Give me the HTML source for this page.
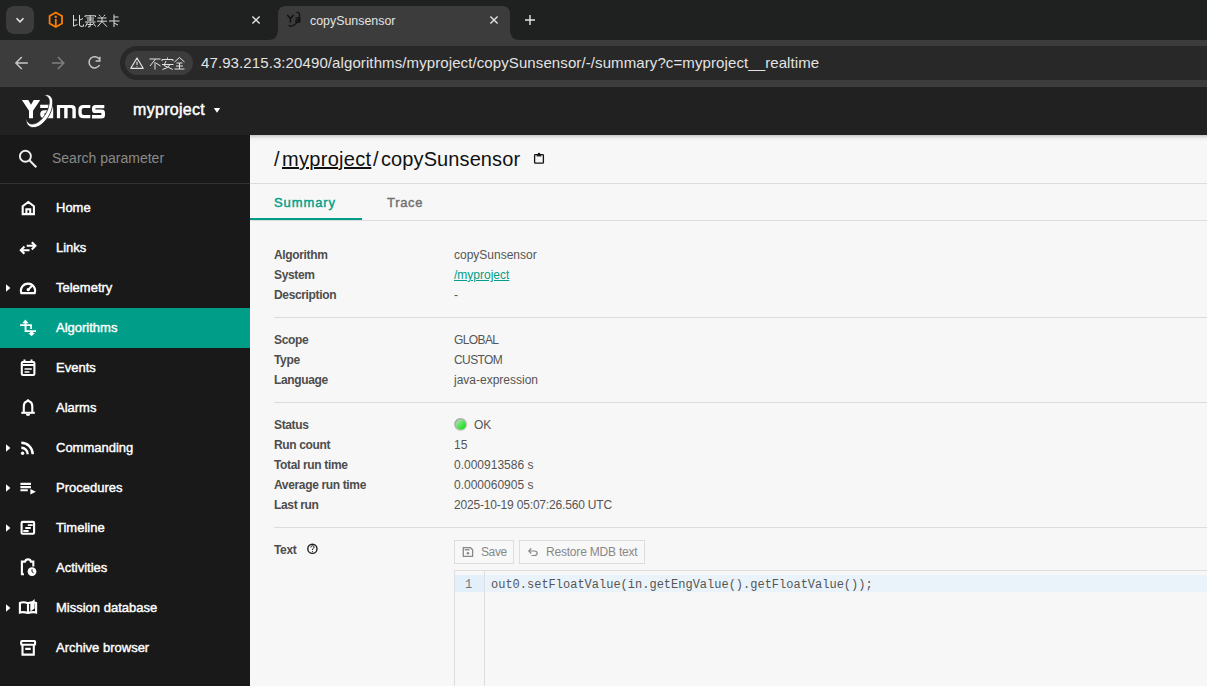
<!DOCTYPE html>
<html><head><meta charset="utf-8">
<style>
*{box-sizing:border-box;margin:0;padding:0}
html,body{width:1207px;height:686px;overflow:hidden;background:#f7f7f7;font-family:"Liberation Sans",sans-serif}
.a{position:absolute}
svg{position:absolute;overflow:visible}
.t{position:absolute;white-space:nowrap;line-height:1}
#frame{left:0;top:0;width:1207px;height:40px;background:#1f2020}
#toolbar{left:0;top:40px;width:1207px;height:47px;background:#3c3c3c}
#omni{left:120px;top:46px;width:1120px;height:34px;border-radius:17px;background:#282828}
#chip{left:125px;top:51px;width:68px;height:24px;border-radius:12px;background:#3c3c3c}
#header{left:0;top:87px;width:1207px;height:48px;background:#212121}
#side{left:0;top:135px;width:250px;height:551px;background:#191919}
#main{left:250px;top:135px;width:957px;height:551px;background:#f7f7f7}
.nav{position:absolute;left:56px;color:#fff;font-size:13px;-webkit-text-stroke:0.4px #fff;white-space:nowrap;line-height:1}
.lbl{position:absolute;left:274px;color:#4d4d4d;font-size:12px;font-weight:bold;letter-spacing:-0.35px;white-space:nowrap;line-height:1}
.val{position:absolute;left:454px;color:#555;font-size:12px;white-space:nowrap;line-height:1}
.hr{position:absolute;left:274px;width:933px;height:1px;background:#dcdcdc}
</style></head><body>
<!-- browser chrome -->
<div id="frame" class="a"></div>
<div class="a" style="left:6px;top:6px;width:28px;height:28px;border-radius:8px;background:#3c3c3c"></div>
<svg style="left:0;top:0" width="40" height="40"><path d="M16.5 18.3 L20 21.8 L23.5 18.3" fill="none" stroke="#e3e3e3" stroke-width="1.6"/></svg>
<!-- tab 1 -->
<svg style="left:0;top:0" width="280" height="40">
  <path d="M55.8 12.5 L62 16 L62 23.5 L55.8 27 L49.6 23.5 L49.6 16 Z" fill="none" stroke="#ff7d00" stroke-width="1.8"/>
  <circle cx="55.8" cy="16.8" r="1.2" fill="#ff7d00"/>
  <path d="M55.8 19 L55.8 26" stroke="#ff7d00" stroke-width="1.8"/>
  <path d="M252.4 16.4 L259.6 23.6 M259.6 16.4 L252.4 23.6" stroke="#e3e3e3" stroke-width="1.4"/>
</svg>
<!-- chinese 比赛关卡 approximations -->
<svg style="left:72px;top:14px" width="50" height="14">
  <g fill="none" stroke="#dcdcdc" stroke-width="1">
    <path d="M1.5 1 V12.2 L5.5 10.5 M1.5 6 H5 M7.5 1 V11 Q7.5 12.3 9 12.3 H11.5 V10.5 M7.5 6.2 L11 4.5"/>
    <path d="M13 3 V1.8 H23.5 V3 M14.5 4 H22 M15 6 H22 M18.2 1 V7 M13 8 H23.5 M15.5 8.5 L13.5 12.5 M21 8.5 L23.5 12.5 M15.5 10.5 H21 M18.2 8.5 V12.5 L16 13"/>
    <path d="M27 0.8 L28.5 2.5 M33 0.8 L31.5 2.5 M25.5 4 H34.5 M25 7.2 H35 M30 3 V7.5 L25.5 12.8 M30 7.5 L35 12.8"/>
    <path d="M42 0.5 V13 M42 3 H46.5 M37 7 H47.5 M42 9 L46 11"/>
  </g>
</svg>
<div class="t" style="left:72px;top:14px;font-size:12px;color:#dcdcdc"></div>
<!-- active tab -->
<svg style="left:268px;top:0" width="256" height="41">
  <path d="M0 40 Q10 40 10 30 L10 14 Q10 6 18 6 L234 6 Q242 6 242 14 L242 30 Q242 40 252 40 Z" fill="#3c3c3c"/>
</svg>
<!-- favicon black yamcs -->
<svg style="left:0;top:0" width="310" height="40">
  <g fill="none" stroke="#111">
  <path d="M287.3 15.1 L290.4 18.6 L293.5 15.1 M290.4 18.6 V22.8" stroke-width="1.5"/>
  <path d="M295.5 17.8 H299.8 V22.2 H296.5 Q295.5 22 295.7 20.8 Q296 20 297 20 H299.8" stroke-width="1.3"/>
  <path d="M296.6 12.5 Q299.6 11.8 299.6 15.5 Q299.4 21.5 294.3 24.8 Q289.8 28 289 24.8" stroke-width="1.4"/>
  </g>
</svg>
<div class="t" style="left:310px;top:15px;font-size:12.4px;color:#e3e3e3">copySunsensor</div>
<svg style="left:0;top:0" width="560" height="40">
  <path d="M490.4 16.4 L497.6 23.6 M497.6 16.4 L490.4 23.6" stroke="#e3e3e3" stroke-width="1.4"/>
  <path d="M525 20 H535 M530 15 V25" stroke="#e3e3e3" stroke-width="1.4"/>
</svg>
<div id="toolbar" class="a"></div>
<svg style="left:0;top:40px" width="120" height="47">
  <path d="M16.5 23 H27.8 M21.8 17 L15.9 23 L21.8 29" fill="none" stroke="#c7c7c7" stroke-width="1.5"/>
  <path d="M52 23 H63.3 M57.9 17 L63.8 23 L57.9 29" fill="none" stroke="#7f7f7f" stroke-width="1.5"/>
  <path d="M99.2 19 A5.6 5.6 0 1 0 99.6 25" fill="none" stroke="#c7c7c7" stroke-width="1.5"/>
  <path d="M99.8 16.8 V21 H95.6" fill="none" stroke="#c7c7c7" stroke-width="1.5"/>
</svg>
<div id="omni" class="a"></div>
<div id="chip" class="a"></div>
<svg style="left:125px;top:51px" width="70" height="24">
  <path d="M12 7 L18.2 17.3 H5.8 Z" fill="none" stroke="#e3e3e3" stroke-width="1.2" stroke-linejoin="round"/>
  <path d="M12 10.5 V14 M12 15.3 V16" stroke="#e3e3e3" stroke-width="1.1"/>
  <g fill="none" stroke="#e3e3e3" stroke-width="1">
    <path d="M24.5 8 H35.5 M30.5 8 L25 15 M30 11 V18.5 M31 12 L35.5 15"/>
    <path d="M42.5 6.5 V7.8 M37 10 V8.5 H48 V10 M41 10 L39 14.5 Q44 16.5 47.8 18.5 M37 13.5 H48.5 M45 13.5 Q44 17 37.5 18.5"/>
    <path d="M54.5 6.5 L49.5 11 M54.5 6.5 L59.5 11 M51.5 12 H57.5 M51 15 H58 M54.5 12 V18 M49.5 18 H59.5"/>
  </g>
</svg>
<div class="t" style="left:201px;top:55px;font-size:15px;letter-spacing:0.1px;color:#e3e3e3">47.93.215.3:20490/algorithms/myproject/copySunsensor/-/summary?c=myproject__realtime</div>

<!-- yamcs header -->
<div id="header" class="a"></div>
<svg style="left:0;top:0" width="240" height="140">
  <g fill="#fff">
    <path d="M21.9 100 H28.3 L31 104.8 L33.7 100 H40.2 L33 110.8 V118.3 H29 V110.8 Z"/>
    <path fill-rule="evenodd" d="M40.2 104.7 H49.4 Q53.2 104.7 53.2 108.5 V118.3 H44.3 Q40.2 118.3 40.2 114.3 Q40.2 110.3 44.3 110.3 H49.6 V108.1 H40.2 Z M44.6 112.9 H49.6 V115.2 H44.6 Z"/>
    <path d="M56.9 104.9 H71.5 Q75.8 104.9 75.8 109.2 V118.3 H72.4 V109.6 Q72.4 108.1 71 108.1 H67.6 V118.3 H64.2 V108.1 H60.1 V118.3 H56.9 Z"/>
    <path d="M90.3 104.9 H83.5 Q78.4 104.9 78.4 110 V113.2 Q78.4 118.3 83.5 118.3 H90.3 V115.1 H83.8 Q81.7 115.1 81.7 113 V110.2 Q81.7 108.1 83.8 108.1 H90.3 Z"/>
    <path d="M104.3 105 H95.5 Q92 105 92 108.5 V110 Q92 113.1 95 113.1 H100.8 Q101.5 113.1 101.5 114 Q101.5 115 100.8 115 H92 V118.6 H101.5 Q105 118.6 105 115.1 V113 Q105 109.6 101.5 109.6 H96 Q95.3 109.6 95.3 108.9 Q95.3 108.2 96 108.2 H104.3 Z"/>
  </g>
  <path d="M26.3 117.5 C25 127 33.5 130.5 41 124.8 C48 119.5 53.8 109.5 52.6 100.5 C52 95.5 48 93.3 43.3 95.5 C47 95.3 49.5 98 49.3 102 C49 109.5 44.5 117.5 38.5 121.8 C33 125.5 27.2 125 26.3 117.5 Z" fill="#fff" stroke="#212121" stroke-width="0.8"/>
</svg>
<div class="t" style="left:133px;top:102px;font-size:16px;-webkit-text-stroke:0.45px #fff;letter-spacing:0.3px;color:#fff">myproject</div>
<svg style="left:213px;top:107px" width="8" height="7"><path d="M0.8 1 H7.2 L4 5.8 Z" fill="#fff"/></svg>

<!-- sidebar -->
<div id="side" class="a"></div>
<div class="a" style="left:0;top:183px;width:250px;height:1px;background:#333"></div>
<svg style="left:0;top:0" width="50" height="180">
  <circle cx="25.4" cy="156.3" r="5.5" fill="none" stroke="#eee" stroke-width="1.9"/>
  <path d="M29.4 160.3 L36.3 167.2" stroke="#eee" stroke-width="2.1"/>
</svg>
<div class="t" style="left:52px;top:151px;font-size:14px;color:#8a8a8a">Search parameter</div>

<div class="a" style="left:0;top:308px;width:250px;height:40px;background:#009e88"></div>
<svg style="left:0;top:0" width="250" height="686">
 <g fill="#fff">
  <path d="M6 284.2 L10.4 288 L6 291.8 Z"/>
  <path d="M6 444.2 L10.4 448 L6 451.8 Z"/>
  <path d="M6 484.2 L10.4 488 L6 491.8 Z"/>
  <path d="M6 524.2 L10.4 528 L6 531.8 Z"/>
  <path d="M6 604.2 L10.4 608 L6 611.8 Z"/>
 </g>
 <g fill="none" stroke="#fff" stroke-width="2.1">
  <!-- home -->
  <path d="M22.7 214.1 V206.2 L28.3 202 L33.9 206.2 V214.1 Z M26.4 214.1 V209.3 H30.2 V214.1" stroke-linejoin="miter"/>
  <!-- links -->
  <path d="M26.7 245.8 H35.5 M31.8 242.2 L35.4 245.8 L31.8 249.4"/>
  <path d="M29.5 250.2 H20.6 M24.4 246.6 L20.8 250.2 L24.4 253.8"/>
  <!-- telemetry gauge -->
  <path d="M21.3 293.1 A7.1 7.1 0 1 1 34.7 293.1 Z"/>
  <path d="M28.3 289.6 L33 284.7" stroke-width="2"/>
  <!-- events -->
  <rect x="21.8" y="362" width="12.6" height="13" rx="1.2"/>
  <path d="M21.8 365 H34.4 M24.5 359.5 V362 M31.5 359.5 V362"/>
  <path d="M24.5 369 H31.8 M24.5 372 H29.5" stroke-width="1.7"/>
  <!-- alarms bell -->
  <path d="M23.8 412.8 V406.5 Q23.8 402.6 26.6 401.6 L28.05 400.2 L29.5 401.6 Q32.3 402.6 32.3 406.5 V412.8" stroke-linejoin="round"/>
  <path d="M21.3 412.8 H34.8"/>
  <!-- commanding rss -->
  <path d="M21.3 447.8 A6.4 6.4 0 0 1 27.7 454.2 M21.3 442.8 A11.4 11.4 0 0 1 32.7 454.2" stroke-width="2.4"/>
  <!-- procedures -->
  <path d="M20.4 483.9 H31 M20.4 487.1 H31 M20.4 490.2 H27.8"/>
  <!-- timeline -->
  <rect x="21.6" y="521.9" width="12.5" height="11.9" rx="1"/>
  <path d="M27.8 525.1 H32.7 M25.3 528 H30.8 M23.3 531 H28.6" stroke-width="1.8"/>
  <!-- activities clipboard -->
  <path d="M30 561.6 H33.3 V566.5 M24 574.2 H21.9 V561.6 H25.8 M25.2 561.6 Q25.5 559.4 28 559.4 Q30.5 559.4 30.8 561.6"/>
  <!-- mission database book -->
  <path d="M19.9 612.5 V603 Q23.5 601.5 28 603.2 Q32.5 601.5 36.1 603 V612.5 Q32.5 611.5 28 613 Q23.5 611.5 19.9 612.5 Z M28 603.2 V613"/>
  <!-- archive -->
  <rect x="21.2" y="641" width="13.9" height="3.8" rx="0.8"/>
  <path d="M22.5 645 V654.6 H33.8 V645 M25.2 648.9 H30.7"/>
 </g>
 <g fill="#fff">
  <circle cx="28.2" cy="289.7" r="1.6"/>
  <path d="M25.4 319.6 L28.6 323.2 L26.5 323.2 L26.5 330.2 L36 330.2 L36 332 L24.6 332 L24.6 323.2 L22.2 323.2 Z"/>
  <path d="M20.1 324.2 H31.9 V328.9 H30.2 V325.9 H20.1 Z"/>
  <path d="M30.2 332 H33.2 L33.2 333 L34.9 333 L31.6 336.2 L28.3 333 L30.2 333 Z"/>
  <path d="M25.8 413.9 H30.2 Q30.2 416 28 416 Q25.8 416 25.8 413.9 Z"/>
  <circle cx="22.6" cy="453.3" r="1.7"/>
  <path d="M30.4 489 L35.9 491.8 L30.4 494.6 Z"/>
  <circle cx="32" cy="571.6" r="4.4"/>
  <path d="M30.3 603 L34.6 599 V608.5 L30.3 611.5 Z"/>
 </g>
 <path d="M32 569.3 V571.8 L33.6 572.8" fill="none" stroke="#191919" stroke-width="1"/>
</svg>

<div class="nav" style="top:201px">Home</div>
<div class="nav" style="top:241px">Links</div>
<div class="nav" style="top:281px">Telemetry</div>
<div class="nav" style="top:321px">Algorithms</div>
<div class="nav" style="top:361px">Events</div>
<div class="nav" style="top:401px">Alarms</div>
<div class="nav" style="top:441px">Commanding</div>
<div class="nav" style="top:481px">Procedures</div>
<div class="nav" style="top:521px">Timeline</div>
<div class="nav" style="top:561px">Activities</div>
<div class="nav" style="top:601px">Mission database</div>
<div class="nav" style="top:641px">Archive browser</div>

<!-- main -->
<div id="main" class="a"></div>
<div class="a" style="left:250px;top:135px;width:957px;height:6px;background:linear-gradient(rgba(0,0,0,0.2),rgba(0,0,0,0.05) 50%,rgba(0,0,0,0))"></div>
<div class="t" style="left:274px;top:149px;font-size:20px;color:#111">/</div>
<div class="t" style="left:282px;top:149px;font-size:20px;letter-spacing:0.3px;color:#111;text-decoration:underline">myproject</div>
<div class="t" style="left:373px;top:149px;font-size:20px;color:#111">/</div>
<div class="t" style="left:381px;top:149px;font-size:20px;letter-spacing:0.1px;color:#111">copySunsensor</div>
<div class="a" style="left:250px;top:183px;width:957px;height:1px;background:#dcdcdc"></div>
<div class="t" style="left:274px;top:196px;font-size:13px;-webkit-text-stroke:0.4px #009e88;letter-spacing:0.9px;color:#009e88">Summary</div>
<div class="t" style="left:387px;top:196px;font-size:13px;-webkit-text-stroke:0.4px #6f6f6f;letter-spacing:0.7px;color:#6f6f6f">Trace</div>
<div class="a" style="left:250px;top:220px;width:957px;height:1px;background:#dcdcdc"></div>
<div class="a" style="left:250px;top:218px;width:112px;height:2px;background:#009e88"></div>

<div class="lbl" style="top:249px">Algorithm</div>
<div class="lbl" style="top:269px">System</div>
<div class="lbl" style="top:289px">Description</div>
<div class="val" style="top:249px">copySunsensor</div>
<div class="val" style="top:269px;color:#009e88;text-decoration:underline">/myproject</div>
<div class="val" style="top:289px">-</div>
<div class="hr" style="top:317px"></div>
<div class="lbl" style="top:334px">Scope</div>
<div class="lbl" style="top:354px">Type</div>
<div class="lbl" style="top:374px">Language</div>
<div class="val" style="top:334px;letter-spacing:-0.6px">GLOBAL</div>
<div class="val" style="top:354px;letter-spacing:-0.6px">CUSTOM</div>
<div class="val" style="top:374px">java-expression</div>
<div class="hr" style="top:402px"></div>
<div class="lbl" style="top:419px">Status</div>
<div class="lbl" style="top:439px">Run count</div>
<div class="lbl" style="top:459px">Total run time</div>
<div class="lbl" style="top:479px">Average run time</div>
<div class="lbl" style="top:499px">Last run</div>
<svg style="left:450px;top:414px" width="22" height="22">
 <defs><linearGradient id="gdot" x1="0" y1="0" x2="1" y2="1"><stop offset="0" stop-color="#bdeebd"/><stop offset="0.45" stop-color="#62e062"/><stop offset="1" stop-color="#00e000"/></linearGradient>
 <linearGradient id="gring" x1="0" y1="0" x2="1" y2="1"><stop offset="0" stop-color="#9a9a9a"/><stop offset="1" stop-color="#e0d8e0"/></linearGradient></defs>
 <circle cx="10.7" cy="10.4" r="6.5" fill="url(#gring)"/>
 <circle cx="10.9" cy="10.7" r="5.1" fill="url(#gdot)"/>
</svg>
<div class="val" style="top:419px;left:474px">OK</div>
<div class="val" style="top:439px">15</div>
<div class="val" style="top:459px">0.000913586 s</div>
<div class="val" style="top:479px">0.000060905 s</div>
<div class="val" style="top:499px;letter-spacing:-0.18px">2025-10-19 05:07:26.560 UTC</div>
<div class="hr" style="top:527px"></div>
<div class="lbl" style="top:544px">Text</div>

<!-- buttons -->
<div class="a" style="left:454px;top:540px;width:60px;height:24px;border:1px solid #ddd;background:#f8f8f8"></div>
<div class="t" style="left:481px;top:546px;font-size:12px;letter-spacing:-0.4px;color:#888">Save</div>
<div class="a" style="left:519px;top:540px;width:126px;height:24px;border:1px solid #ddd;background:#f8f8f8"></div>
<div class="t" style="left:546px;top:546px;font-size:12px;letter-spacing:-0.2px;color:#888">Restore MDB text</div>

<!-- editor -->
<div class="a" style="left:454px;top:570px;width:760px;height:130px;border:1px solid #ddd;background:#f7f7f7"></div>
<div class="a" style="left:485px;top:575px;width:722px;height:17px;background:#ebf3fa"></div>
<div class="a" style="left:455px;top:575px;width:29px;height:17px;background:#e3f0fc"></div>
<div class="a" style="left:484px;top:571px;width:1px;height:120px;background:#ddd"></div>
<div class="t" style="left:465px;top:579px;font-size:12px;font-family:'Liberation Mono',monospace;color:#777">1</div>
<div class="t" style="left:491px;top:579px;font-size:12px;font-family:'Liberation Mono',monospace;color:#555">out0.setFloatValue(in.getEngValue().getFloatValue());</div>
<svg style="left:0;top:0" width="1207" height="686">
 <!-- title clipboard -->
 <g fill="none" stroke="#111" stroke-width="1.3">
  <rect x="534.6" y="154.6" width="8.8" height="8.6" rx="0.8"/>
  <path d="M536.6 155.8 H541.4"/>
 </g>
 <circle cx="539" cy="154" r="1.2" fill="#111"/>
 <!-- help -->
 <circle cx="312.4" cy="548.8" r="4.6" fill="none" stroke="#222" stroke-width="1.4"/>
 <path d="M310.9 547.4 Q310.9 545.7 312.5 545.7 Q314.1 545.7 314.1 547.2 Q314.1 548.2 312.5 549 V550" fill="none" stroke="#222" stroke-width="1"/>
 <circle cx="312.5" cy="551.6" r="0.6" fill="#222"/>
 <!-- save icon -->
 <path d="M463.3 547.7 H470.5 L472.6 549.8 V556.3 H463.3 Z" fill="none" stroke="#888" stroke-width="1.3"/>
 <path d="M464.8 549.7 H469.5" stroke="#888" stroke-width="1.4"/>
 <circle cx="467.9" cy="553.3" r="1.3" fill="#888"/>
 <!-- restore icon -->
 <path d="M529 551 H534.3 Q537.2 551 537.2 553.3 Q537.2 555.5 534.3 555.5 H531.5 M531.2 548.5 L528.8 551 L531.2 553.5" fill="none" stroke="#888" stroke-width="1.2"/>
</svg>
</body></html>
